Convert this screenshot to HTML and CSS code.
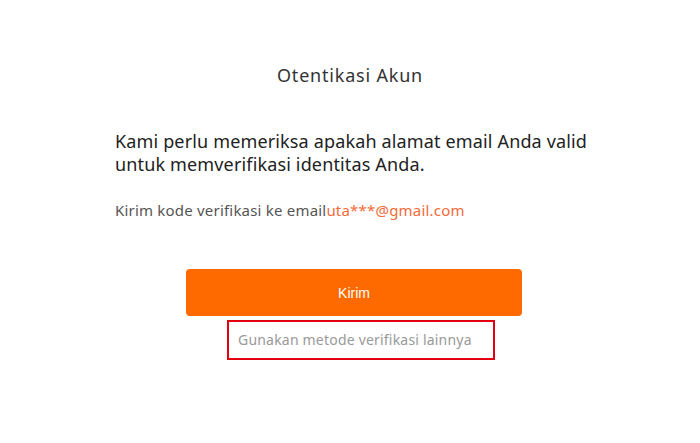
FILE: index.html
```html
<!DOCTYPE html>
<html lang="id">
  <head>
    <meta charset="UTF-8" />
    <meta name="viewport" content="width=device-width, initial-scale=1.0" />
    <title>Otentikasi Akun</title>
    <link rel="stylesheet" href="styles.css">
  </head>
  <body>
    <div class="auth">
      <h1 class="auth-title">Otentikasi Akun</h1>
      <p class="auth-desc">Kami perlu memeriksa apakah alamat email Anda valid untuk memverifikasi identitas Anda.</p>
      <p class="auth-target">Kirim kode verifikasi ke email<span class="auth-email">uta***@gmail.com</span></p>
      <div class="auth-actions">
        <button type="button" class="btn-send">Kirim</button>
        <a href="#" class="other-method">Gunakan metode verifikasi lainnya</a>
      </div>
    </div>
  </body>
</html>
```

FILE: styles.css
```css
body {
  font-family: "Noto Sans", "Open Sans", sans-serif;
  margin: 0;
  padding: 0;
  background-color: #fff;
  color: #333;
}

.auth {
  width: 480px;
  margin: 0 auto;
  padding: 62px 0 0 10px;
}

.auth-title {
  margin: 0 0 42px -10px;
  text-align: center;
  font-size: 18px;
  font-weight: normal;
  letter-spacing: 0.8px;
  line-height: 26px;
  color: #333;
}

.auth-desc {
  margin: 0;
  font-size: 18px;
  line-height: 23px;
  letter-spacing: 0.15px;
  color: #222;
}

.auth-target {
  margin: 23px 0 0;
  font-size: 15px;
  line-height: 22px;
  letter-spacing: 0.2px;
  color: #555;
}

.auth-email {
  color: #f26b3a;
}

.auth-actions {
  display: flex;
  flex-direction: column;
  align-items: center;
  margin-top: 48px;
}

.btn-send {
  width: 336px;
  height: 47px;
  margin-right: 2px;
  border: none;
  border-radius: 4px;
  background-color: #ff6a00;
  color: #fff;
  font-family: "Liberation Sans", Arial, sans-serif;
  font-size: 14px;
  cursor: pointer;
}

.other-method {
  display: block;
  box-sizing: border-box;
  width: 268px;
  height: 40px;
  margin: 4px 0 0 12px;
  padding: 0 9px;
  border: 2px solid #e5000f;
  font-size: 14px;
  line-height: 36px;
  letter-spacing: 0.2px;
  color: #999;
  text-decoration: none;
}
```
